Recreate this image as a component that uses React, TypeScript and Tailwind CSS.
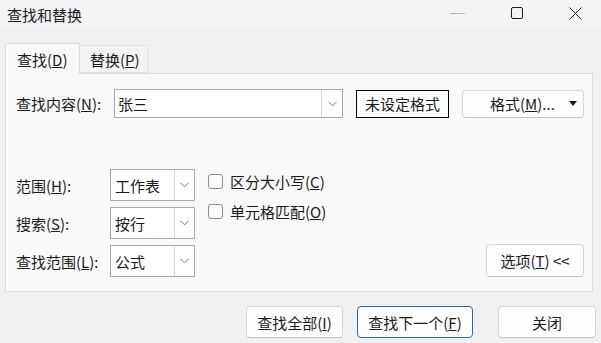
import React from 'react';

const Chevron: React.FC = () => (
    <svg width="9" height="6" viewBox="0 0 9 6" className="text-[#7a7a7a]">
        <polyline points="0.5,0.8 4.5,4.8 8.5,0.8" fill="none" stroke="currentColor" strokeWidth="1" />
    </svg>
);

const Select: React.FC<{ value: string }> = ({ value }) => (
    <div className="flex w-[85px] h-[32px] border border-[#a9a9a9] bg-white">
        <span className="flex-1 flex items-center pl-[4px]">{value}</span>
        <div className="w-[20px] border-l border-[#d6d6d6] flex items-center justify-center">
            <Chevron />
        </div>
    </div>
);

const Check: React.FC<{ children: React.ReactNode }> = ({ children }) => (
    <div className="flex items-center h-[20px]">
        <div className="w-[15px] h-[15px] rounded-[3px] border border-[#8c8c8c] bg-[#fbfbfb]" />
        <span className="ml-[7px]">{children}</span>
    </div>
);

const Btn: React.FC<{ w: string; accent?: boolean; children: React.ReactNode }> = ({ w, accent, children }) => (
    <button
        className={
            accent
                ? `${w} h-[32px] rounded-[4px] border border-[#2a6aa3] bg-[#fdfdfd] flex items-center justify-center`
                : `${w} h-[32px] rounded-[4px] border border-[#d6d6d6] border-b-[#c2c2c2] bg-[#fdfdfd] flex items-center justify-center`
        }
    >
        {children}
    </button>
);

const App: React.FC = () => {
    return (
        <div className="w-[601px] h-[343px] flex flex-col bg-[#f0f0f0] text-[15px] leading-none text-[#1b1b1b] font-['Microsoft_YaHei','Noto_Sans_CJK_SC',sans-serif] overflow-hidden">
            {/* title bar */}
            <div className="h-[30px] shrink-0 flex items-center bg-[#f3f3f6]">
                <span className="pl-[7px] -mt-[2px]">查找和替换</span>
                <div className="ml-auto flex items-center gap-[46px] pr-[19px] -mt-[4px]">
                    <div className="w-[15px] h-px bg-[#b8b8b8]" />
                    <div className="w-[12px] h-[12px] border border-[#1b1b1b] rounded-[2px]" />
                    <svg width="13" height="13" viewBox="0 0 13 13">
                        <path d="M0.5 0.5 L12.5 12.5 M12.5 0.5 L0.5 12.5" stroke="#1b1b1b" strokeWidth="1" />
                    </svg>
                </div>
            </div>

            <div className="flex-1 flex flex-col pl-[5px] pr-[8px]">
                {/* tabs */}
                <div className="mt-[13px] flex items-end h-[30px]">
                    <div className="relative z-10 -mb-px w-[75px] h-[31px] border border-b-0 border-[#dcdcdc] bg-[#f9f9f9] rounded-t-[2px] flex items-center pl-[11px]">
                        查找(<span className="underline">D</span>)
                    </div>
                    <div className="w-[68px] h-[28px] border border-l-0 border-[#e2e2e2] bg-[#f3f3f3] flex items-center pl-[10px]">
                        替换(<span className="underline">P</span>)
                    </div>
                </div>

                {/* panel */}
                <div className="h-[219px] border border-[#dcdcdc] bg-[#f9f9f9] flex flex-col pl-[10px] pr-[8px] pt-[15px] pb-[14px]">
                    <div className="flex items-center">
                        <span className="w-[98px]">查找内容(<span className="underline">N</span>):</span>
                        <div className="flex w-[229px] h-[29px] border border-[#a9a9a9] bg-white">
                            <span className="flex-1 flex items-center pl-[3px]">张三</span>
                            <div className="w-[21px] border-l border-[#d6d6d6] flex items-center justify-center">
                                <Chevron />
                            </div>
                        </div>
                        <div className="ml-[13px] w-[93px] h-[28px] border border-black bg-white flex items-center justify-center">
                            未设定格式
                        </div>
                        <div className="ml-[13px] w-[122px] h-[28px] rounded-[4px] border border-[#d6d6d6] border-b-[#c2c2c2] bg-[#fdfdfd] flex items-center">
                            <span className="ml-[27px]">格式(<span className="underline">M</span>)...</span>
                            <svg width="8" height="5" viewBox="0 0 8 5" className="ml-auto mr-[6px]">
                                <path d="M0 0 L8 0 L4 5 Z" fill="#1b1b1b" />
                            </svg>
                        </div>
                    </div>

                    <div className="mt-auto flex items-end">
                        <div className="flex flex-col gap-[6px]">
                            <div className="flex items-center">
                                <span className="w-[94px]">范围(<span className="underline">H</span>):</span>
                                <Select value="工作表" />
                            </div>
                            <div className="flex items-center">
                                <span className="w-[94px]">搜索(<span className="underline">S</span>):</span>
                                <Select value="按行" />
                            </div>
                            <div className="flex items-center">
                                <span className="w-[94px]">查找范围(<span className="underline">L</span>):</span>
                                <Select value="公式" />
                            </div>
                        </div>
                        <div className="self-start ml-[13px] pt-[2px] flex flex-col gap-[10px]">
                            <Check>区分大小写(<span className="underline">C</span>)</Check>
                            <Check>单元格匹配(<span className="underline">O</span>)</Check>
                        </div>
                        <button className="ml-auto w-[98px] h-[33px] rounded-[4px] border border-[#d6d6d6] border-b-[#c2c2c2] bg-[#fdfdfd] flex items-center justify-center">
                            选项(<span className="underline">T</span>) &lt;&lt;
                        </button>
                    </div>
                </div>

                {/* footer buttons */}
                <div className="mt-[14px] flex justify-end -mr-[3px]">
                    <Btn w="w-[97px]">查找全部(<span className="underline">I</span>)</Btn>
                    <div className="ml-[14px]">
                        <Btn w="w-[116px]" accent>查找下一个(<span className="underline">F</span>)</Btn>
                    </div>
                    <div className="ml-[25px]">
                        <Btn w="w-[98px]">关闭</Btn>
                    </div>
                </div>
            </div>
        </div>
    );
};

export default App;
